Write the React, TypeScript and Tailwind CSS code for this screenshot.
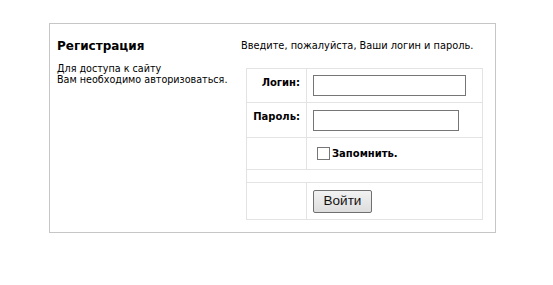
const App = () => {
  return (
    <div className="w-[553px] h-[285px] bg-white pt-[23px] pl-[49px] font-['DejaVu_Sans',sans-serif] text-black">
      <div className="w-[447px] h-[210px] border border-[#c6c6c6] flex">
        <div className="w-[191px] pl-[7px] pt-[15px] shrink-0 whitespace-nowrap">
          <h2 className="text-[12px] font-bold leading-[15px]">Регистрация</h2>
          <p className="mt-[9px] text-[9.6px] leading-[11px]">
            Для доступа к сайту
            <br />
            Вам необходимо авторизоваться.
          </p>
        </div>
        <div className="pt-[16px]">
          <p className="text-[9.8px] leading-[12px] whitespace-nowrap">Введите, пожалуйста, Ваши логин и пароль.</p>
          <table className="ml-[5px] mt-[16px] border-collapse text-[10px]">
            <tbody>
              <tr className="h-[34px]">
                <td className="w-[60px] border border-[#e3e3e3] pt-[6px] pr-[6px] align-top text-right font-bold">
                  Логин:
                </td>
                <td className="w-[176px] border border-[#e3e3e3] pl-[6px] align-middle">
                  <input type="text" className="block w-[153px] h-[21px] border border-[#767676]" />
                </td>
              </tr>
              <tr className="h-[35px]">
                <td className="border border-[#e3e3e3] pt-[6px] pr-[6px] align-top text-right font-bold">Пароль:</td>
                <td className="border border-[#e3e3e3] pl-[6px] align-middle">
                  <input type="password" className="block w-[146px] h-[21px] border border-[#767676]" />
                </td>
              </tr>
              <tr className="h-[32px]">
                <td className="border border-[#e3e3e3]"></td>
                <td className="border border-[#e3e3e3] pl-[10px]">
                  <label className="flex items-center font-bold">
                    <span className="inline-block w-[13px] h-[13px] border border-[#767676] bg-white mr-[2px]" />
                    Запомнить.
                  </label>
                </td>
              </tr>
              <tr className="h-[13px]">
                <td colSpan={2} className="border border-[#e3e3e3]"></td>
              </tr>
              <tr className="h-[37px]">
                <td className="border border-[#e3e3e3]"></td>
                <td className="border border-[#e3e3e3] pl-[6px]">
                  <button className="w-[59px] h-[23px] border border-[#707070] rounded-[2px] bg-gradient-to-b from-[#f2f2f2] to-[#dddddd] font-['Liberation_Sans',sans-serif] text-[13.5px] text-[#111]">
                    Войти
                  </button>
                </td>
              </tr>
            </tbody>
          </table>
        </div>
      </div>
    </div>
  );
};

export default App;
